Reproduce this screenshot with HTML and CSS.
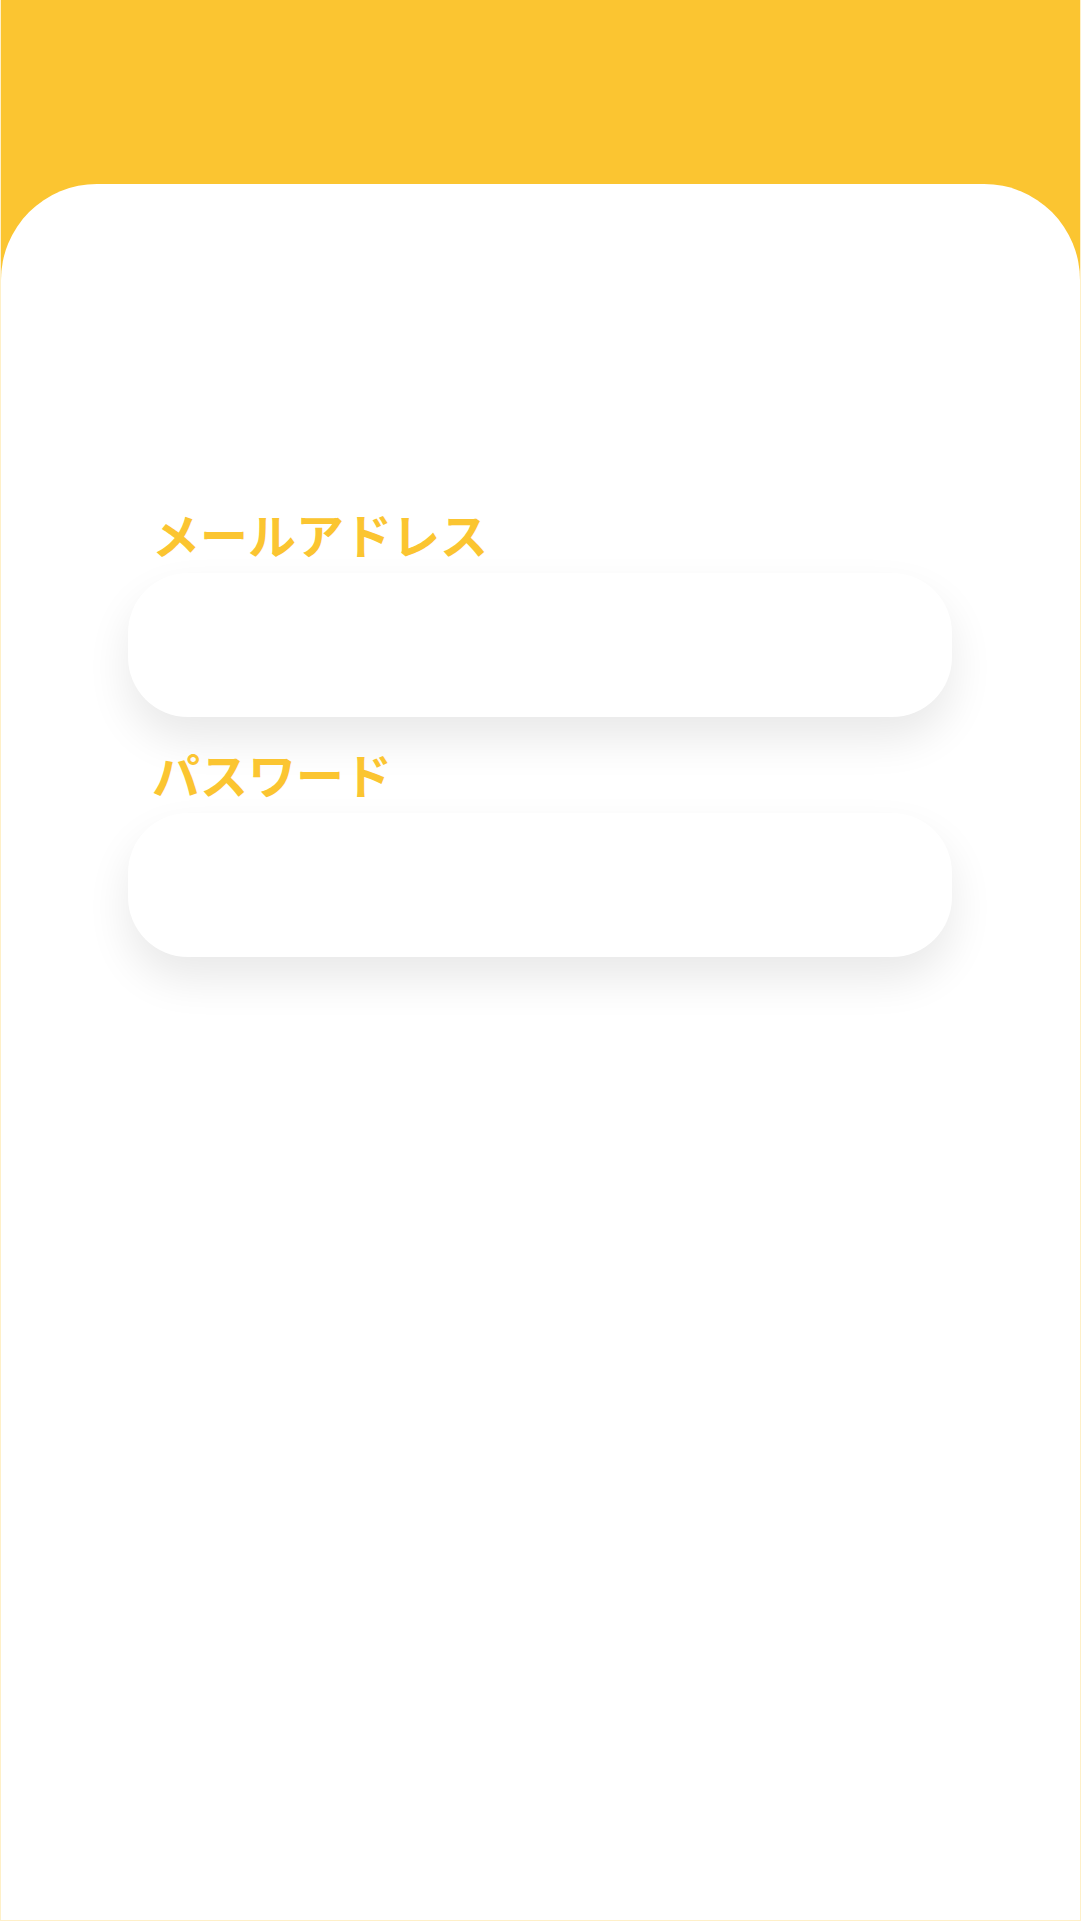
FILE: index.html
```html
<!DOCTYPE html>
<html lang="ja">
<head>
<meta charset="utf-8">
<title>ログイン</title>
<link rel="stylesheet" href="styles.css">
</head>
<body>
<div class="page">
  <div class="card">
    <form class="form">
      <label class="field">
        <span class="label">メールアドレス</span>
        <span class="input"></span>
      </label>
      <label class="field">
        <span class="label">パスワード</span>
        <span class="input"></span>
      </label>
    </form>
  </div>
</div>
</body>
</html>
```

FILE: styles.css
```css
html, body {
  margin: 0;
  padding: 0;
  background: #ffffff;
}
.page {
  box-sizing: border-box;
  width: 1081px;
  height: 1921px;
  background: #fbc531;
  border-left: 1px solid #fff0c8;
  border-right: 1px solid #fff0c8;
  border-bottom: 1px solid #fff0c8;
  padding-top: 184px;
  display: flex;
  flex-direction: column;
}
.card {
  flex: 1;
  background: #ffffff;
  border-radius: 96px 96px 0 0;
  padding-top: 325px;
}
.form {
  margin: 0 128px 0 127px;
  display: flex;
  flex-direction: column;
  gap: 32px;
}
.field {
  display: flex;
  flex-direction: column;
  gap: 16px;
}
.label {
  font-family: "Noto Sans CJK JP", "Noto Sans", sans-serif;
  font-size: 48px;
  line-height: 48px;
  font-weight: 700;
  letter-spacing: 0;
  color: #fbc531;
  padding-left: 24px;
}
.input {
  display: block;
  height: 144px;
  background: #ffffff;
  border-radius: 60px;
  box-shadow: 0 22px 44px rgba(0, 0, 0, 0.09);
}
```
